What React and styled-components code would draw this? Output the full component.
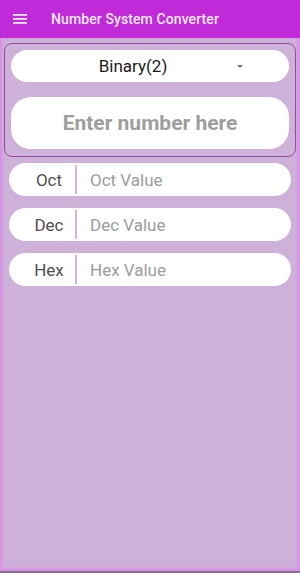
import React from "react";
import styled, { createGlobalStyle } from "styled-components";

const GlobalStyle = createGlobalStyle`
  html, body {
    margin: 0;
    padding: 0;
    height: 100%;
  }
  body {
    font-family: Roboto, "Noto Sans", sans-serif;
  }
  #root {
    height: 100%;
  }
`;

const Screen = styled.div`
  width: 300px;
  height: 573px;
  display: flex;
  flex-direction: column;
  background: #cdb1d8;
  box-sizing: border-box;
  border-bottom: 2px solid #8c6f92;
  overflow: hidden;
`;

const AppBar = styled.div`
  height: 38px;
  flex-shrink: 0;
  background: #c02ad9;
  display: flex;
  align-items: center;
  padding-left: 13px;
  gap: 24px;
`;

const Title = styled.div`
  color: #f6e9f9;
  font-size: 14px;
  font-weight: 500;
  letter-spacing: 0.1px;
`;

const Body = styled.div`
  flex: 1;
  display: flex;
  flex-direction: column;
  padding: 5px 4px 0;
  box-shadow: inset 3px 0 3px -1px #dc8ce9, inset -3px 0 3px -1px #dc8ce9,
    inset 0 -3px 3px -1px #dc8ce9;
`;

const Card = styled.div`
  border: 1px solid #8f4c9c;
  border-radius: 8px;
  padding: 6px 6px 7px;
  display: flex;
  flex-direction: column;
  gap: 15px;
`;

const Select = styled.div`
  height: 32px;
  background: #fff;
  border-radius: 16px;
  display: flex;
  align-items: center;
  justify-content: center;
  padding-right: 34px;
  position: relative;
  font-size: 17px;
  color: #1a1a1a;
`;

const Caret = styled.span`
  position: absolute;
  right: 46px;
  top: 15px;
  width: 0;
  height: 0;
  border-left: 3.5px solid transparent;
  border-right: 3.5px solid transparent;
  border-top: 3.5px solid #707070;
`;

const NumberInput = styled.div`
  height: 52px;
  background: #fff;
  border-radius: 20px;
  display: flex;
  align-items: center;
  justify-content: center;
  font-size: 21px;
  font-weight: 700;
  color: #9e9e9e;
`;

const Rows = styled.div`
  display: flex;
  flex-direction: column;
  gap: 12px;
  padding: 6px 5px 0;
`;

const Row = styled.div`
  height: 33px;
  background: #fff;
  border-radius: 17px;
  display: flex;
  align-items: center;
`;

const Label = styled.div`
  width: 68px;
  height: 29px;
  display: flex;
  align-items: center;
  justify-content: center;
  border-right: 2px solid #d3b5db;
  font-size: 17px;
  font-weight: 400;
  color: #505050;
  box-sizing: border-box;
  padding-left: 14px;
`;

const Value = styled.div`
  padding-left: 13px;
  font-size: 17px;
  color: #9c9c9c;
`;

const MenuIcon = () => (
  <svg width="14" height="12" viewBox="0 0 14 12">
    <rect x="0" y="1" width="14" height="1.8" fill="#f6e9f9" />
    <rect x="0" y="5" width="14" height="1.8" fill="#f6e9f9" />
    <rect x="0" y="9" width="14" height="1.8" fill="#f6e9f9" />
  </svg>
);

const bases = ["Oct", "Dec", "Hex"];

const App = () => {
  return (
    <>
      <GlobalStyle />
      <Screen>
        <AppBar>
          <MenuIcon />
          <Title>Number System Converter</Title>
        </AppBar>
        <Body>
          <Card>
            <Select>
              Binary(2)
              <Caret />
            </Select>
            <NumberInput>Enter number here</NumberInput>
          </Card>
          <Rows>
            {bases.map((b) => (
              <Row key={b}>
                <Label>{b}</Label>
                <Value>{b} Value</Value>
              </Row>
            ))}
          </Rows>
        </Body>
      </Screen>
    </>
  );
};

export default App;
